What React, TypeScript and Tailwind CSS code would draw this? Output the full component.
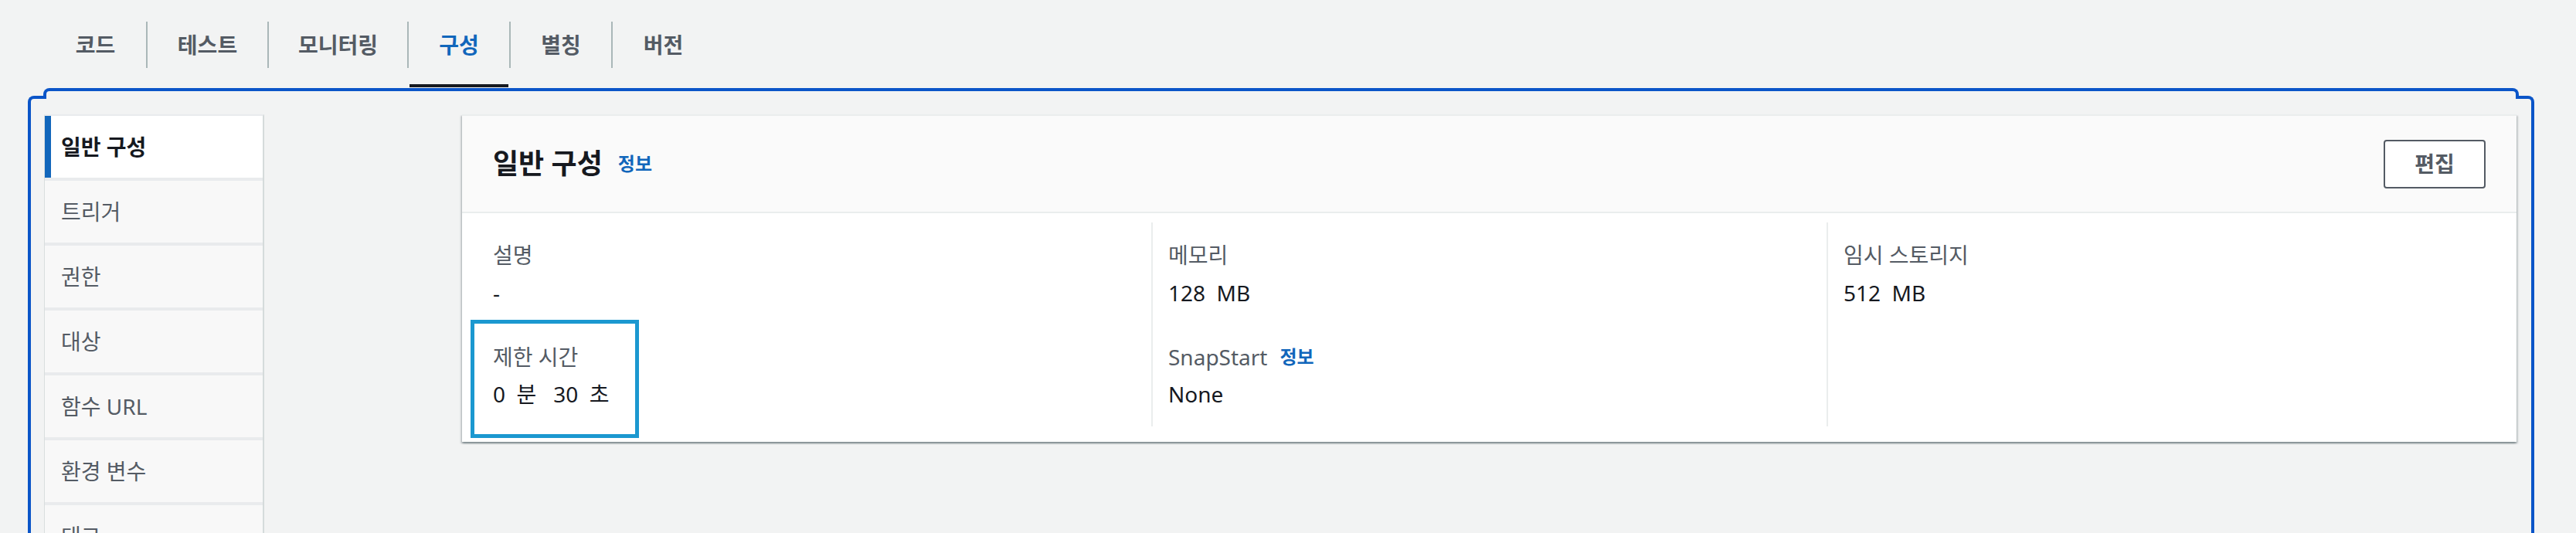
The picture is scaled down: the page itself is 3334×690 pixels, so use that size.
import React, { Fragment } from "react";

const tabs = [
  { label: "코드", w: "w-[131px]", active: false },
  { label: "테스트", w: "w-[155px]", active: false },
  { label: "모니터링", w: "w-[179px]", active: false },
  { label: "구성", w: "w-[130px]", active: true },
  { label: "별칭", w: "w-[130px]", active: false },
  { label: "버전", w: "w-[131px]", active: false },
];

const navItems = ["일반 구성", "트리거", "권한", "대상", "함수 URL", "환경 변수", "태그"];

function Info() {
  return <span className="text-[24px] font-bold leading-[40px] text-[#1166bb]">정보</span>;
}

export default function App() {
  return (
    <div className="h-[690px] w-[3334px] overflow-hidden bg-[#f2f3f3] font-['Noto_Sans','Noto_Sans_CJK_KR',sans-serif] text-[28px] leading-[40px] text-[#16191f]">
      {/* Tabs */}
      <div className="flex h-[114px] pl-[58px]">
        {tabs.map((t, i) => (
          <Fragment key={t.label}>
            {i > 0 && <div className="mt-[28px] h-[60px] w-[2px] bg-[#aab7b8]" />}
            <div className={`relative h-[114px] ${t.w}`}>
              <div
                className={`mt-[28px] flex h-[60px] items-center justify-center font-bold ${
                  t.active ? "text-[#1166bb]" : "text-[#545b64]"
                }`}
              >
                {t.label}
              </div>
              {t.active && <div className="absolute bottom-[1px] left-[1px] right-[1px] h-[4px] bg-[#16191f]" />}
            </div>
          </Fragment>
        ))}
      </div>

      {/* Tab panel */}
      <div className="relative ml-[36px] mr-[54px] flex h-[576px] overflow-hidden pl-[21px] pr-[23px] pt-[34px]">
        {/* focus ring */}
        <div className="pointer-events-none absolute left-[20px] right-[20px] top-0 z-10 h-[14px] rounded-t-[8px] border-x-4 border-t-4 border-[#0b55c8]" />
        <div className="pointer-events-none absolute bottom-0 left-0 top-[10px] z-10 w-[24px] rounded-tl-[8px] border-l-4 border-t-4 border-[#0b55c8]" />
        <div className="pointer-events-none absolute bottom-0 right-0 top-[10px] z-10 w-[24px] rounded-tr-[8px] border-r-4 border-t-4 border-[#0b55c8]" />

        {/* Side navigation */}
        <nav className="flex w-[285px] shrink-0 flex-col gap-[4px] self-start border-l border-r-2 border-t-2 border-l-[#d9dede] border-r-[#d5dbdb] border-t-[#e9ebed] bg-[#e9ebed]">
          {navItems.map((item, i) => (
            <div
              key={item}
              className={`flex h-[80px] shrink-0 items-center pl-[21px] ${
                i === 0
                  ? "bg-white font-bold text-[#16191f] shadow-[inset_8px_0_0_#1166bb]"
                  : "bg-[#f8f8f8] text-[#545b64]"
              }`}
            >
              {item}
            </div>
          ))}
        </nav>

        {/* Card */}
        <section className="ml-[256px] w-[2659px] shrink-0 self-start border-t-2 border-[#eaeded] bg-white shadow-[0_2px_2px_0_rgba(0,28,36,0.3),2px_2px_2px_0_rgba(0,28,36,0.15),-2px_2px_2px_0_rgba(0,28,36,0.15)]">
          <header className="flex h-[126px] items-center justify-between border-b-2 border-[#eaeded] bg-[#fafafa] px-[40px]">
            <div className="flex items-center gap-[20px]">
              <h2 className="text-[36px] font-bold leading-[48px] text-[#16191f]">일반 구성</h2>
              <Info />
            </div>
            <button className="flex h-[63px] w-[132px] items-center justify-center rounded-[4px] border-2 border-[#545b64] bg-white font-bold text-[#545b64]">
              편집
            </button>
          </header>

          <div className="grid grid-cols-3 pb-[20px] pl-[18px] pr-[19px] pt-[12px]">
            {/* Column 1 */}
            <div className="flex flex-col pb-[22px] pl-[22px] pt-[22px]">
              <div className="text-[#545b64]">설명</div>
              <div className="mt-[9px]">-</div>
              <div className="relative mt-[43px]">
                <div className="pointer-events-none absolute -left-[29px] -top-[28px] h-[153px] w-[218px] border-[5px] border-[#1b98d0]" />
                <div className="text-[#545b64]">제한 시간</div>
                <div className="mt-[8px] whitespace-pre">0  분   30  초</div>
              </div>
            </div>

            {/* Column 2 */}
            <div className="flex flex-col border-l-2 border-[#eaeded] pb-[22px] pl-[20px] pt-[22px]">
              <div className="text-[#545b64]">메모리</div>
              <div className="mt-[9px] whitespace-pre">128  MB</div>
              <div className="mt-[43px] flex items-center gap-[16px]">
                <span className="text-[#545b64]">SnapStart</span>
                <Info />
              </div>
              <div className="mt-[8px]">None</div>
            </div>

            {/* Column 3 */}
            <div className="flex flex-col border-l-2 border-[#eaeded] pb-[22px] pl-[20px] pt-[22px]">
              <div className="text-[#545b64]">임시 스토리지</div>
              <div className="mt-[9px] whitespace-pre">512  MB</div>
            </div>
          </div>
        </section>
      </div>
    </div>
  );
}
